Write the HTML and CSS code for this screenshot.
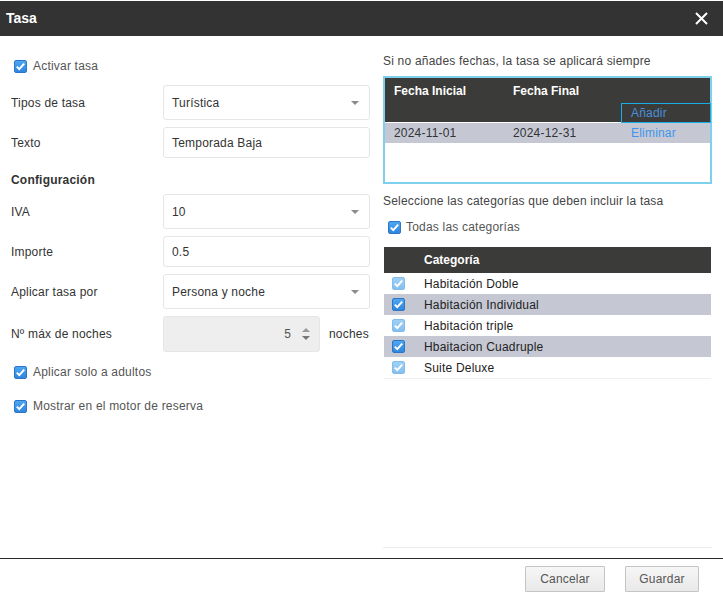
FILE: index.html
```html
<!DOCTYPE html>
<html lang="es">
<head>
<meta charset="utf-8">
<title>Tasa</title>
<link rel="stylesheet" href="styles.css">
</head>
<body>
<div class="dialog">
  <div class="titlebar">
    <span class="title">Tasa</span>
    <svg class="close" width="13" height="13" viewBox="0 0 13 13"><path d="M1 1 L12 12 M12 1 L1 12" stroke="#fff" stroke-width="2" fill="none"/></svg>
  </div>
  <div class="content">
    <div class="left">
      <div class="check-row first">
        <span class="cb"><svg viewBox="0 0 13 13"><path d="M2.8 6.6 L5.3 9.1 L10.2 3.6" fill="none" stroke="#fff" stroke-width="2"/></svg></span>
        <span class="check-label">Activar tasa</span>
      </div>
      <div class="field f-tipos">
        <label>Tipos de tasa</label>
        <div class="control select">Turística<span class="caret"></span></div>
      </div>
      <div class="field f-text">
        <label>Texto</label>
        <div class="control input">Temporada Baja</div>
      </div>
      <div class="section">Configuración</div>
      <div class="field f-iva">
        <label>IVA</label>
        <div class="control select">10<span class="caret"></span></div>
      </div>
      <div class="field f-text">
        <label>Importe</label>
        <div class="control input">0.5</div>
      </div>
      <div class="field f-sel">
        <label>Aplicar tasa por</label>
        <div class="control select">Persona y noche<span class="caret"></span></div>
      </div>
      <div class="field f-num">
        <label>Nº máx de noches</label>
        <div class="control number"><span class="num">5</span><span class="spin"><span class="up"></span><span class="down"></span></span></div>
        <span class="unit">noches</span>
      </div>
      <div class="check-row adults">
        <span class="cb"><svg viewBox="0 0 13 13"><path d="M2.8 6.6 L5.3 9.1 L10.2 3.6" fill="none" stroke="#fff" stroke-width="2"/></svg></span>
        <span class="check-label">Aplicar solo a adultos</span>
      </div>
      <div class="check-row motor">
        <span class="cb"><svg viewBox="0 0 13 13"><path d="M2.8 6.6 L5.3 9.1 L10.2 3.6" fill="none" stroke="#fff" stroke-width="2"/></svg></span>
        <span class="check-label">Mostrar en el motor de reserva</span>
      </div>
    </div>
    <div class="right">
      <div class="intro">Si no añades fechas, la tasa se aplicará siempre</div>
      <div class="dates">
        <div class="dates-head">
          <div class="hrow">
            <span class="c1">Fecha Inicial</span>
            <span class="c2">Fecha Final</span>
          </div>
          <div class="hrow2">
            <span class="add">Añadir</span>
          </div>
        </div>
        <div class="drow">
          <span class="c1">2024-11-01</span>
          <span class="c2">2024-12-31</span>
          <span class="c3 link">Eliminar</span>
        </div>
      </div>
      <div class="intro2">Seleccione las categorías que deben incluir la tasa</div>
      <div class="check-row all">
        <span class="cb"><svg viewBox="0 0 13 13"><path d="M2.8 6.6 L5.3 9.1 L10.2 3.6" fill="none" stroke="#fff" stroke-width="2"/></svg></span>
        <span class="check-label">Todas las categorías</span>
      </div>
      <div class="cats">
        <div class="cat-head"><span class="ccb"></span><span>Categoría</span></div>
        <div class="cat-row"><span class="ccb"><span class="cb light"><svg viewBox="0 0 13 13"><path d="M2.8 6.6 L5.3 9.1 L10.2 3.6" fill="none" stroke="#fff" stroke-width="2"/></svg></span></span><span>Habitación Doble</span></div>
        <div class="cat-row alt"><span class="ccb"><span class="cb"><svg viewBox="0 0 13 13"><path d="M2.8 6.6 L5.3 9.1 L10.2 3.6" fill="none" stroke="#fff" stroke-width="2"/></svg></span></span><span>Habitación Individual</span></div>
        <div class="cat-row"><span class="ccb"><span class="cb light"><svg viewBox="0 0 13 13"><path d="M2.8 6.6 L5.3 9.1 L10.2 3.6" fill="none" stroke="#fff" stroke-width="2"/></svg></span></span><span>Habitación triple</span></div>
        <div class="cat-row alt"><span class="ccb"><span class="cb"><svg viewBox="0 0 13 13"><path d="M2.8 6.6 L5.3 9.1 L10.2 3.6" fill="none" stroke="#fff" stroke-width="2"/></svg></span></span><span>Hbaitacion Cuadruple</span></div>
        <div class="cat-row"><span class="ccb"><span class="cb light"><svg viewBox="0 0 13 13"><path d="M2.8 6.6 L5.3 9.1 L10.2 3.6" fill="none" stroke="#fff" stroke-width="2"/></svg></span></span><span>Suite Deluxe</span></div>
      </div>
    </div>
  </div>
  <div class="footer">
    <button class="btn cancel">Cancelar</button>
    <button class="btn save">Guardar</button>
  </div>
</div>
</body>
</html>
```

FILE: styles.css
```css
* { box-sizing: border-box; }
html, body { margin: 0; padding: 0; background: #fff; }
body {
  font-family: "Liberation Sans", Arial, sans-serif;
  font-size: 12px;
  letter-spacing: 0.2px;
  color: #333;
}
.dialog {
  width: 723px;
  height: 595px;
  display: flex;
  flex-direction: column;
  overflow: hidden;
}
.titlebar {
  margin-top: 1px;
  height: 35px;
  flex: none;
  background: #333333;
  display: flex;
  align-items: center;
  justify-content: space-between;
  padding: 0 15px 0 6px;
}
.title {
  color: #fff;
  font-weight: bold;
  font-size: 14px;
  letter-spacing: 0;
  position: relative;
  top: -1px;
}
.close { display: block; }

.content {
  height: 522px;
  flex: none;
  display: flex;
}
.left {
  width: 383px;
  flex: none;
  padding: 20px 0 0 11px;
}
.right {
  width: 329px;
  flex: none;
  height: 512px;
  border-bottom: 1px solid #ececec;
}

/* checkbox */
.cb {
  display: inline-block;
  width: 13px;
  height: 13px;
  border-radius: 2px;
  background: linear-gradient(#4fa6f2, #2f86dc);
  border: 1px solid #2b76c6;
  flex: none;
  position: relative;
}
.cb svg { position: absolute; left: -1px; top: -1px; width: 13px; height: 13px; display: block; }
.cb.light {
  background: linear-gradient(#9fd0f6, #84c0f0);
  border-color: #85bbe8;
}
.check-row {
  display: flex;
  align-items: center;
  height: 20px;
}
.check-row .check-label { margin-left: 6px; color: #555; }
.left .check-row { padding-left: 3px; }
.adults { margin-top: 10px; }
.motor { margin-top: 14px; }

/* fields */
.field {
  display: flex;
  align-items: center;
}
.field label { width: 152px; flex: none; }
.control {
  width: 207px;
  border: 1px solid #e6e6e6;
  border-radius: 3px;
  display: flex;
  align-items: center;
  padding: 0 8px 0 8px;
  position: relative;
  color: #333;
}
.f-tipos { margin-top: 9px; }
.f-tipos .control, .f-iva .control, .f-sel .control { height: 35px; }
.f-text { margin-top: 7px; }
.f-text .control { height: 31px; }
.f-iva { margin-top: 4px; }
.f-sel { margin-top: 7px; }
.f-num { margin-top: 7px; }
.select .caret {
  position: absolute;
  right: 10px;
  top: 15px;
  width: 0; height: 0;
  border-left: 4px solid transparent;
  border-right: 4px solid transparent;
  border-top: 4px solid #8a8a8a;
}
.section {
  margin-top: 12px;
  height: 20px;
  line-height: 20px;
  font-weight: bold;
  font-size: 12px;
  color: #333;
}
.number {
  width: 157px;
  height: 36px;
  background: #eeeeee;
  justify-content: flex-end;
  padding-right: 9px;
}
.num { color: #555; }
.spin {
  display: flex;
  flex-direction: column;
  gap: 4px;
  margin-left: 11px;
}
.spin .up {
  width: 0; height: 0;
  border-left: 4px solid transparent;
  border-right: 4px solid transparent;
  border-bottom: 4px solid #999;
}
.spin .down {
  width: 0; height: 0;
  border-left: 4px solid transparent;
  border-right: 4px solid transparent;
  border-top: 4px solid #777;
}
.unit { margin-left: 9px; color: #333; }

/* right column */
.intro {
  margin-top: 17px;
  line-height: 16px;
  height: 16px;
  color: #444;
}
.dates {
  margin-top: 7px;
  height: 108px;
  border: 2px solid #7fd0ec;
}
.dates-head { background: #3b3b39; height: 45px; border-bottom: 1px solid #fff; }
.hrow { display: flex; height: 25px; align-items: center; }
.hrow span { color: #fff; font-weight: bold; letter-spacing: 0; }
.c1 { width: 118px; padding-left: 9px; flex: none; }
.c2 { width: 118px; padding-left: 10px; flex: none; }
.c3 { padding-left: 10px; flex: none; }
.hrow2 { display: flex; justify-content: flex-end; height: 20px; }
.add {
  width: 90px;
  height: 20px;
  border: 1px solid #19aee6;
  color: #4a90d9;
  padding-left: 9px;
  line-height: 18px;
  margin-right: -1px;
}
.drow {
  display: flex;
  height: 20px;
  align-items: center;
  background: #c5c8d3;
  color: #333;
}
.link { color: #3e95ec; }
.intro2 {
  margin-top: 9px;
  line-height: 16px;
  height: 16px;
  color: #444;
}
.check-row.all { margin-top: 8px; padding-left: 5px; }
.check-row.all .check-label { margin-left: 5px; }
.cats {
  margin-top: 10px;
  margin-left: 1px;
  width: 327px;
  border-bottom: 1px solid #eeeeee;
}
.cat-head {
  height: 26px;
  background: #3b3b39;
  display: flex;
  align-items: center;
  color: #fff;
  font-weight: bold;
  letter-spacing: 0;
}
.ccb { width: 40px; flex: none; padding-left: 8px; display: flex; align-items: center; }
.cat-row {
  height: 21px;
  display: flex;
  align-items: center;
  color: #222;
}
.cat-row.alt { background: #c5c8d3; }

/* footer */
.footer {
  flex: none;
  height: 37px;
  border-top: 1px solid #2a2a2a;
  display: flex;
  justify-content: flex-end;
  align-items: flex-start;
  gap: 20px;
  padding: 7px 24px 0 0;
}
.btn {
  height: 26px;
  font-family: "Liberation Sans", Arial, sans-serif;
  font-size: 12px;
  letter-spacing: 0.2px;
  color: #555;
  background: linear-gradient(#f6f6f6, #e9e9e9);
  border: 1px solid #c4c4c4;
  border-radius: 1px;
  padding: 0;
}
.cancel { width: 80px; }
.save { width: 74px; }
```
